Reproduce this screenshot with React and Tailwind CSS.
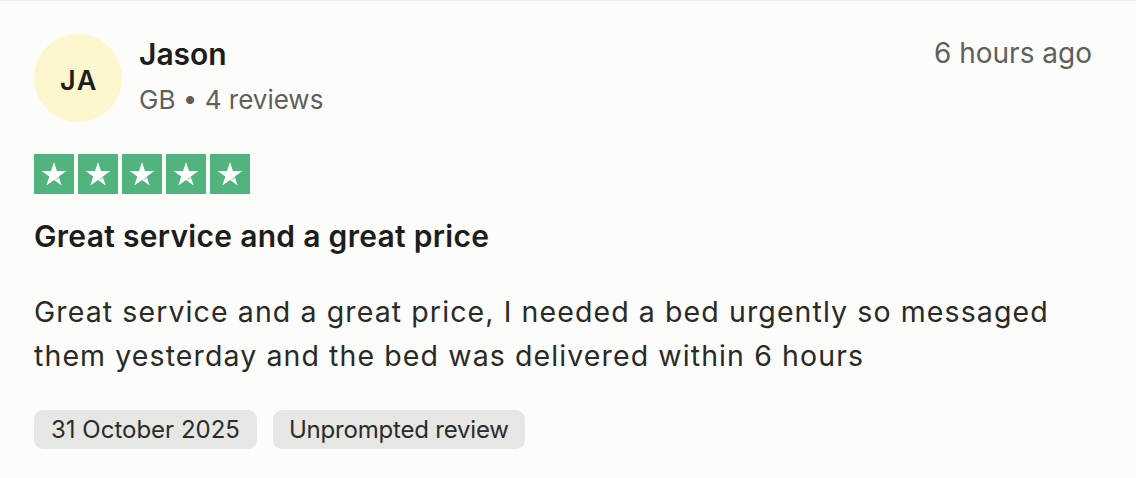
import React from "react";

function Star() {
  return (
    <div className="w-[40px] h-[40px] bg-[#51b47f] flex items-center justify-center">
      <svg width="40" height="40" viewBox="0 0 40 40">
        <polygon
          points="20,8 22.94,16.95 32.36,16.98 24.76,22.55 27.64,31.52 20,26 12.36,31.52 15.24,22.55 7.64,16.98 17.06,16.95"
          fill="#ffffff"
        />
        <polygon points="24.76,22.55 25.6,25.2 20,26 " fill="#51b47f" opacity="0.35" />
      </svg>
    </div>
  );
}

export default function App() {
  return (
    <div className="w-[1136px] min-h-[478px] bg-[#fcfcfa] border-t border-[#ededeb] pl-[34px] pr-[44px] pt-[33px] font-['Inter',sans-serif] text-[#2a2a28]">
      <div className="flex items-start">
        <div className="w-[88px] h-[88px] shrink-0 rounded-full bg-[#fdf6cf] flex items-center justify-center pt-[5px] pl-[2px] text-[27px] leading-none font-semibold tracking-[1.5px] text-[#1d1d1b]">
          JA
        </div>
        <div className="ml-[17px] flex-1 flex flex-col">
          <div className="mt-[2px] text-[30px] leading-[36px] font-semibold text-[#1d1d1b]">Jason</div>
          <div className="mt-[10px] text-[26px] leading-[36px] text-[#5f5f5b]">GB • 4 reviews</div>
        </div>
        <div className="mt-[1px] text-[28px] leading-[36px] text-[#5f5f5b]">6 hours ago</div>
      </div>
      <div className="mt-[32px] flex gap-[4px]">
        <Star />
        <Star />
        <Star />
        <Star />
        <Star />
      </div>
      <div className="mt-[24px] text-[30px] leading-[36px] font-semibold tracking-[0.3px] text-[#1d1d1b]">
        Great service and a great price
      </div>
      <div className="mt-[36px] text-[28.5px] leading-[44px] tracking-[1.1px] max-w-[1045px]">
        Great service and a great price, I needed a bed urgently so messaged them yesterday and the bed was delivered within 6 hours
      </div>
      <div className="mt-[32px] flex gap-[16px]">
        <div className="h-[39px] px-[17px] rounded-[9px] bg-[#e6e6e4] flex items-center text-[24px] text-[#2b2b29]">
          31 October 2025
        </div>
        <div className="h-[39px] px-[16px] rounded-[9px] bg-[#e6e6e4] flex items-center text-[24px] tracking-[-0.2px] text-[#2b2b29]">
          Unprompted review
        </div>
      </div>
    </div>
  );
}
